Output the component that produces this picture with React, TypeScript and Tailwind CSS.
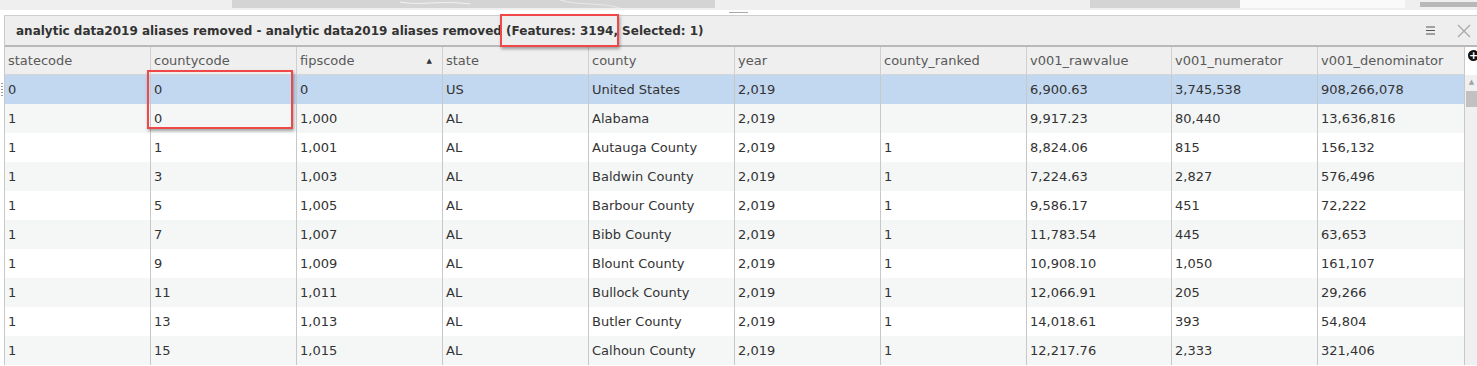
import React from 'react';

const columns = [
  'statecode',
  'countycode',
  'fipscode',
  'state',
  'county',
  'year',
  'county_ranked',
  'v001_rawvalue',
  'v001_numerator',
  'v001_denominator',
];

const widths = [146, 146, 146, 146, 146, 146, 146, 145, 146, 146];

const rows: string[][] = [
  ['0', '0', '0', 'US', 'United States', '2,019', '', '6,900.63', '3,745,538', '908,266,078'],
  ['1', '0', '1,000', 'AL', 'Alabama', '2,019', '', '9,917.23', '80,440', '13,636,816'],
  ['1', '1', '1,001', 'AL', 'Autauga County', '2,019', '1', '8,824.06', '815', '156,132'],
  ['1', '3', '1,003', 'AL', 'Baldwin County', '2,019', '1', '7,224.63', '2,827', '576,496'],
  ['1', '5', '1,005', 'AL', 'Barbour County', '2,019', '1', '9,586.17', '451', '72,222'],
  ['1', '7', '1,007', 'AL', 'Bibb County', '2,019', '1', '11,783.54', '445', '63,653'],
  ['1', '9', '1,009', 'AL', 'Blount County', '2,019', '1', '10,908.10', '1,050', '161,107'],
  ['1', '11', '1,011', 'AL', 'Bullock County', '2,019', '1', '12,066.91', '205', '29,266'],
  ['1', '13', '1,013', 'AL', 'Butler County', '2,019', '1', '14,018.61', '393', '54,804'],
  ['1', '15', '1,015', 'AL', 'Calhoun County', '2,019', '1', '12,217.76', '2,333', '321,406'],
];

// bit of the map peeking out above the panel
function MapStrip() {
  return (
    <svg width="1477" height="10" className="block">
      <rect width="1477" height="10" fill="#efefef" />
      <path d="M232 0 H715 V8 H232 Z" fill="#d4d4d4" />
      <path d="M400 2 C420 6 440 0 470 4" stroke="#f2f2f2" fill="none" />
      <path d="M560 0 C580 6 600 2 620 8" stroke="#e8e8e8" fill="none" />
      <path d="M1090 0 H1240 V8 H1090 Z" fill="#d4d4d4" />
      <path d="M1240 0 H1405 V8 H1240 Z" fill="#fafafa" />
      <path d="M1420 2 H1477 V7 H1420 Z" fill="#b8b8b8" />
    </svg>
  );
}

export default function App() {
  return (
    <div className="relative w-[1477px] h-[366px] overflow-hidden bg-white font-['DejaVu_Sans',sans-serif]">
      <MapStrip />
      <div className="h-[5px] bg-white flex justify-center">
        <div className="w-[19px] h-px bg-[#a8a8a8] mt-[2px]" />
      </div>

      <div className="flex">
        {/* grip column */}
        <div className="w-[4px] flex flex-col items-start pt-[67px]">
          <div className="w-[2px] h-[14px] ml-[1px] bg-[radial-gradient(circle,#9a9a9a_0.6px,transparent_0.8px)] bg-[length:2px_3px]" />
        </div>

        <div className="flex-1 border-l border-[#c9c9c9]">
          {/* title bar */}
          <div className="h-[32px] border-t border-[#cfcfcf] border-b-2 border-b-[#b9b9b9] bg-[#eeeeee] flex items-center pl-[11px] pr-[6px]">
            <span className="text-[12px] font-bold text-[#333] whitespace-nowrap">
              analytic data2019 aliases removed - analytic data2019 aliases removed (Features: 3194, Selected: 1)
            </span>
            <div className="ml-auto flex items-center gap-[22px]">
              <svg width="9" height="9" viewBox="0 0 9 9">
                <path d="M0 1 H9 M0 4.5 H9 M0 8 H9" stroke="#555" strokeWidth="1" />
              </svg>
              <svg width="14" height="14" viewBox="0 0 14 14">
                <path d="M1 1 L13 13 M13 1 L1 13" stroke="#a9a9a9" strokeWidth="1.3" />
              </svg>
            </div>
          </div>

          <div className="flex">
            <div>
              {/* header */}
              <div className="flex h-[28px] bg-[#efefef] border-b border-[#d6d6d6]">
                {columns.map((c, i) => (
                  <div
                    key={c}
                    className="flex items-center justify-between pl-[3px] pr-[10px] pt-px text-[13px] text-[#595959] border-r border-[#cfcfcf] last:border-r-0"
                    style={{ width: widths[i] }}
                  >
                    <span>{c}</span>
                    {c === 'fipscode' && <span className="text-[7px] text-[#333]">▲</span>}
                  </div>
                ))}
              </div>
              {/* rows */}
              {rows.map((r, ri) => (
                <div
                  key={ri}
                  className={
                    'flex h-[29px] ' +
                    (ri === 0 ? 'bg-[#c2d7f0]' : ri % 2 === 1 ? 'bg-[#f5f7f7]' : 'bg-white')
                  }
                >
                  {r.map((v, ci) => (
                    <div
                      key={ci}
                      className="flex items-center pl-[3px] text-[13px] text-[#333] border-r border-[#c8c8c8] last:border-r-0 whitespace-nowrap"
                      style={{ width: widths[ci] }}
                    >
                      {v}
                    </div>
                  ))}
                </div>
              ))}
            </div>

            {/* scrollbar */}
            <div className="w-[13px] flex flex-col border-l border-[#c8c8c8]">
              <div className="h-[28px] bg-white relative">
                <div className="absolute left-[3px] top-[3px] w-[11px] h-[11px] rounded-full bg-[#111] flex items-center justify-center">
                  <span className="text-white text-[11px] font-bold leading-none mt-[-1px]">+</span>
                </div>
              </div>
              <div className="flex-1 bg-[#f0f0f0] flex flex-col items-center pl-[1px]">
                <span className="text-[7px] text-[#a3a3a3] mt-[4px] leading-none">▲</span>
                <div className="w-[11px] h-[16px] bg-[#c1c1c1] mt-[5px]" />
              </div>
            </div>
          </div>
        </div>
      </div>

      {/* highlight boxes */}
      <div className="absolute left-[147px] top-[70px] w-[146px] h-[59px] border-2 border-[#f04848] shadow-[1px_2px_3px_rgba(0,0,0,0.35)]" />
      <div className="absolute left-[500px] top-[14px] w-[119px] h-[33px] border-2 border-[#f04848] shadow-[1px_2px_3px_rgba(0,0,0,0.35)]" />
    </div>
  );
}
